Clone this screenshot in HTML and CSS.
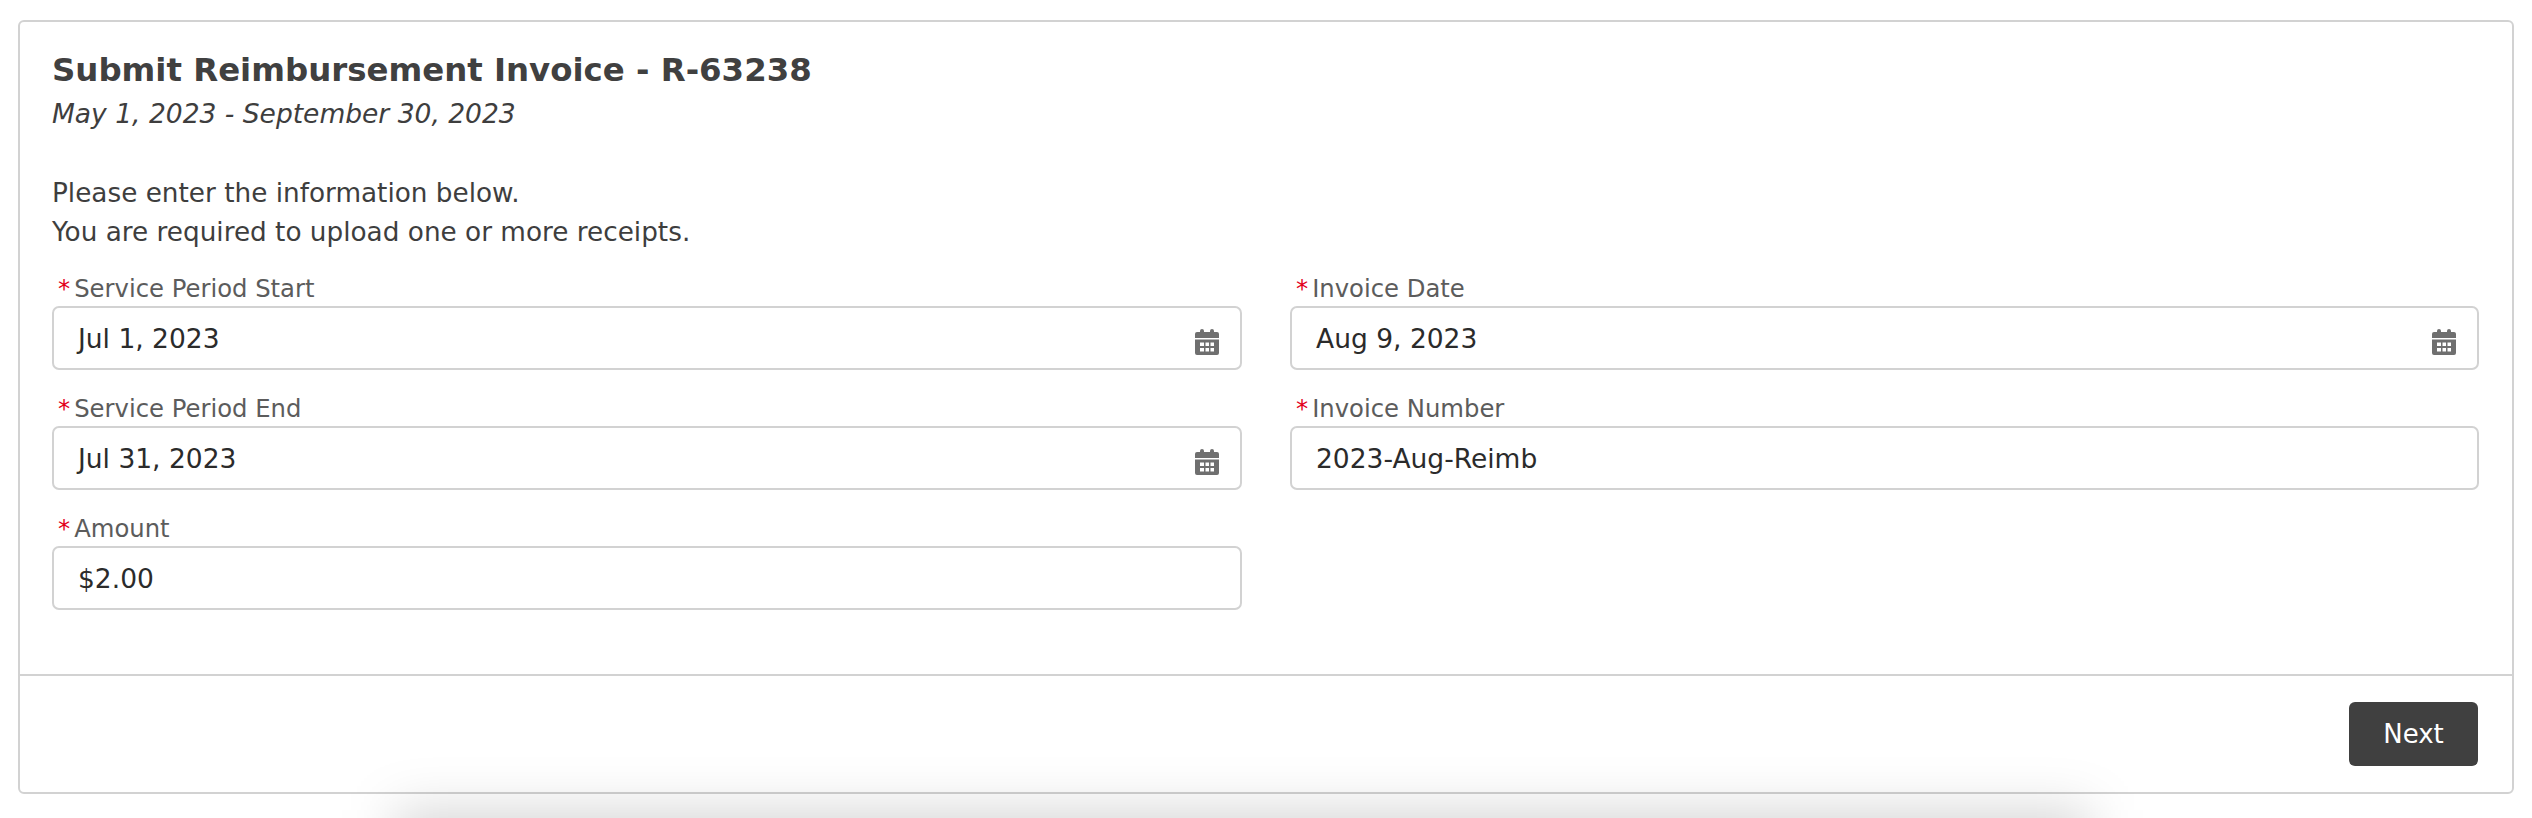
FILE: index.html
```html
<!DOCTYPE html>
<html lang="en">
<head>
<meta charset="utf-8">
<title>Submit Reimbursement Invoice</title>
<link rel="stylesheet" href="styles.css">
</head>
<body>
<svg class="defs" width="0" height="0" aria-hidden="true">
  <symbol id="cal" viewBox="0 0 24 26">
    <path fill="#6f6f6f" fill-rule="evenodd" d="M5 2a2 2 0 0 1 4 0v1h6V2a2 2 0 0 1 4 0v1h3a2 2 0 0 1 2 2v4H0V5a2 2 0 0 1 2-2h3zM0 10.500h24V24a2 2 0 0 1-2 2H2a2 2 0 0 1-2-2zM5 13.500v3.500h4v-3.500zm5.500 0v3.500h3.500v-3.500zm5 0v3.500h3.500v-3.500zM5 19v3.500h4V19zm5.500 0v3.500h3.500V19zm5 0v3.500h3.500V19z"/>
  </symbol>
</svg>
<main class="card">
  <section class="body">
    <h1 class="title">Submit Reimbursement Invoice - R-63238</h1>
    <p class="period">May 1, 2023 - September 30, 2023</p>
    <p class="intro">Please enter the information below.<br>You are required to upload one or more receipts.</p>
    <form class="grid">
      <div class="field"><label class="label"><span class="req">*</span>Service Period Start</label>
        <div class="input"><span>Jul 1, 2023</span><svg class="icon"><use href="#cal"/></svg></div></div>
      <div class="field"><label class="label"><span class="req">*</span>Invoice Date</label>
        <div class="input"><span>Aug 9, 2023</span><svg class="icon"><use href="#cal"/></svg></div></div>
      <div class="field"><label class="label"><span class="req">*</span>Service Period End</label>
        <div class="input"><span>Jul 31, 2023</span><svg class="icon"><use href="#cal"/></svg></div></div>
      <div class="field"><label class="label"><span class="req">*</span>Invoice Number</label>
        <div class="input"><span>2023-Aug-Reimb</span></div></div>
      <div class="field"><label class="label"><span class="req">*</span>Amount</label>
        <div class="input"><span>$2.00</span></div></div>
    </form>
  </section>
  <footer class="foot"><button class="next" type="button">Next</button></footer>
</main>
<div class="shadow-clip"><div class="shadow"></div></div>
</body>
</html>
```
FILE: styles.css
```css
* { box-sizing: border-box; }
html, body { margin: 0; padding: 0; background: #fff; }
html { height: 818px; overflow: hidden; }
body { height: 818px; overflow: hidden; padding: 20px 18px 0 18px; font-family: "DejaVu Sans", sans-serif; color: #3e3e3e; position: relative; }
.defs { position: absolute; }
.card { height: 774px; background: #fff; border: 2px solid #d2d2d2; border-radius: 6px; display: flex; flex-direction: column; }
.body { flex: 1; padding: 28px 33px 0 32px; }
.title { margin: 0; font-size: 32.400px; line-height: 40px; font-weight: 700; color: #404040; }
.period { margin: 4px 0 0; font-size: 26.500px; line-height: 40px; font-style: italic; }
.intro { margin: 40px 0 0; font-size: 26.300px; line-height: 39px; }
.grid { display: grid; grid-template-columns: 1190px 1fr; column-gap: 48px; margin-top: 20px; }
.field { height: 120px; }
.label { display: block; height: 34px; font-size: 24.300px; line-height: 33px; color: #5c5c5c; padding-left: 6px; }
.req { color: #e3001b; margin-right: 4px; }
.input { height: 64px; border: 2px solid #d2d2d2; border-radius: 7px; display: flex; align-items: center; justify-content: space-between; padding: 0 21px 0 24px; font-size: 26.500px; color: #2b2b2b; background: #fff; }
.icon { width: 24px; height: 26px; margin-top: 8px; }
.foot { height: 118px; border-top: 2px solid #d2d2d2; display: flex; align-items: center; justify-content: flex-end; padding: 0 34px; }
.next { width: 129px; height: 64px; background: #404040; color: #fff; border: 0; border-radius: 6px; font: 26px "DejaVu Sans", sans-serif; }
.shadow-clip { position: absolute; left: 0; right: 0; bottom: 0; height: 118px; overflow: hidden; pointer-events: none; }
.shadow { position: absolute; left: 395px; top: 110px; width: 1695px; height: 80px; background: rgba(0,0,0,.16); filter: blur(26px); }
```
